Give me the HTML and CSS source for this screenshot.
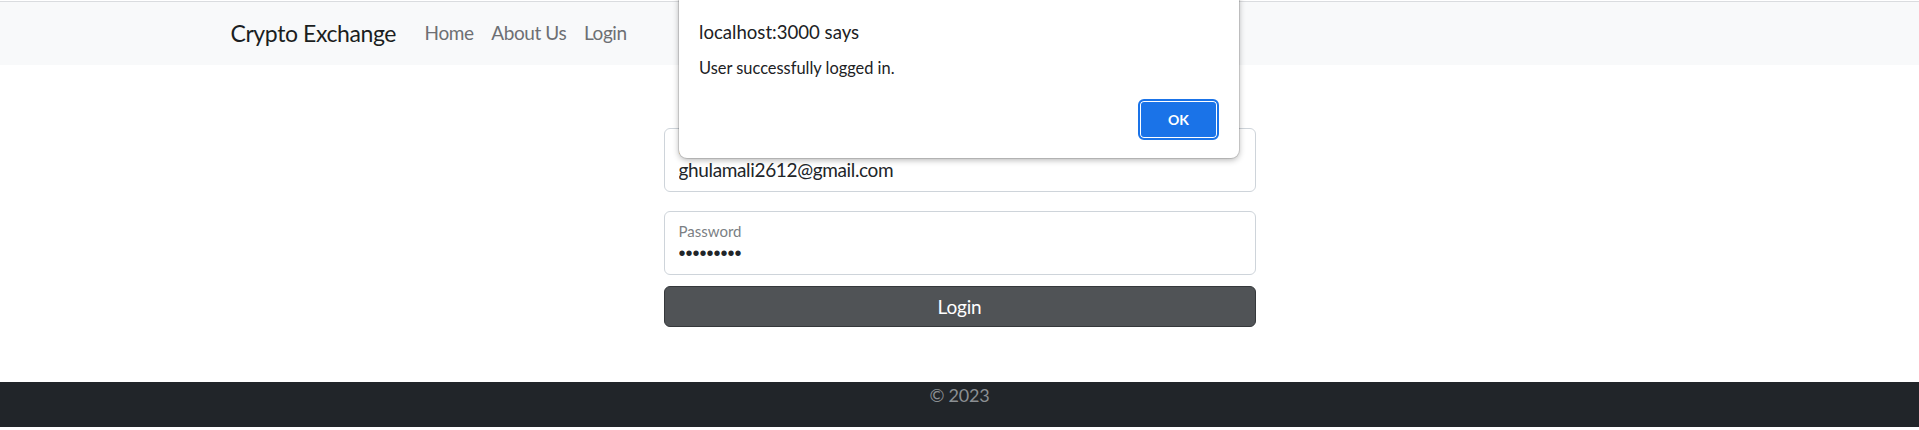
FILE: index.html
```html
<!DOCTYPE html>
<html lang="en">
<head>
<meta charset="utf-8">
<title>Crypto Exchange</title>
<link rel="stylesheet" href="styles.css">
</head>
<body>
  <nav class="navbar">
    <div class="nav-container">
      <a class="brand" href="#">Crypto Exchange</a>
      <ul class="nav-links">
        <li><a href="#">Home</a></li>
        <li><a href="#">About Us</a></li>
        <li><a href="#">Login</a></li>
      </ul>
    </div>
  </nav>

  <main class="main">
    <form class="login-form">
      <div class="field">
        <label class="field-label" for="email">Email address</label>
        <input class="field-input" id="email" type="email" value="ghulamali2612@gmail.com">
      </div>
      <div class="field field-password">
        <label class="field-label" for="password">Password</label>
        <input class="field-input" id="password" type="password" value="123456789">
      </div>
      <button class="login-btn" type="button">Login</button>
    </form>
  </main>

  <footer class="footer">© 2023</footer>

  <div class="dialog" role="alertdialog">
    <div class="dialog-title">localhost:3000 says</div>
    <div class="dialog-message">User successfully logged in.</div>
    <div class="dialog-actions">
      <button class="dialog-ok" type="button">OK</button>
    </div>
  </div>
</body>
</html>
```

FILE: styles.css
```css
* {
  box-sizing: border-box;
}

html, body {
  margin: 0;
  padding: 0;
}

body {
  padding-top: 1px;
  font-family: Lato, "Open Sans", "Liberation Sans", sans-serif;
  color: #212529;
  background: #ffffff;
  width: 1919px;
  height: 430px;
  overflow: hidden;
  position: relative;
}

/* Navbar */
.navbar {
  border-top: 1px solid #dadcdf;
  background: #f8f9fa;
  height: 64px;
  padding-bottom: 2px;
  display: flex;
  align-items: center;
}

.nav-container {
  width: 1458px;
  margin: 0 auto;
  display: flex;
  align-items: center;
}

.brand {
  font-size: 23px;
  letter-spacing: -0.4px;
  line-height: 30px;
  color: #1b1e21;
  text-decoration: none;
  margin-right: 19px;
}

.nav-links {
  list-style: none;
  margin: 0;
  padding: 0;
  display: flex;
}

.nav-links a {
  display: block;
  padding: 0 8.8px;
  font-size: 19px;
  letter-spacing: -0.4px;
  line-height: 30px;
  color: #6d6f73;
  text-decoration: none;
}

.nav-links li:first-child a {
  padding-left: 9.5px;
}

/* Main */
.main {
  padding-top: 63px;
  height: 317px;
}

.login-form {
  width: 592px;
  margin: 0 auto;
  display: flex;
  flex-direction: column;
}

.field {
  border: 1px solid #ced4da;
  border-radius: 6px;
  padding: 9px 14px 9px 14px;
  display: flex;
  flex-direction: column;
  background: #fff;
}

.field-password {
  margin-top: 19px;
}

.field-label {
  font-size: 15px;
  line-height: 20px;
  color: #7b7f84;
}

.field-input {
  border: none;
  outline: none;
  padding: 0;
  margin: 0;
  font-family: inherit;
  font-size: 19px;
  letter-spacing: -0.35px;
  line-height: 24px;
  height: 24px;
  color: #212529;
  background: transparent;
}

.field-password .field-input {
  font-family: "Liberation Sans", Arial, sans-serif;
  font-size: 20px;
  letter-spacing: 0;
}

.login-btn {
  margin-top: 11px;
  height: 41px;
  border: 1px solid #35383b;
  border-radius: 6px;
  background: #505356;
  color: #ffffff;
  font-family: inherit;
  font-size: 19px;
  letter-spacing: -0.2px;
  line-height: 24px;
  padding: 0;
}

/* Footer */
.footer {
  background: #212529;
  height: 45px;
  text-align: center;
  font-size: 18px;
  letter-spacing: -0.2px;
  line-height: 26px;
  color: #8b8f93;
}

/* Browser alert dialog (overlays the page) */
.dialog {
  position: absolute;
  top: -8px;
  left: 679px;
  width: 560px;
  background: #ffffff;
  border-radius: 8px;
  box-shadow: 0 0 0 1px rgba(0, 0, 0, 0.12), 0 2px 6px rgba(0, 0, 0, 0.3);
  padding: 28px 20px 18px 20px;
  color: #202124;
  font-family: Lato, "Open Sans", "Liberation Sans", sans-serif;
}

.dialog-title {
  font-size: 18.6px;
  line-height: 24px;
}

.dialog-message {
  margin-top: 14px;
  font-size: 16.4px;
  line-height: 20px;
}

.dialog-actions {
  margin-top: 21px;
  display: flex;
  justify-content: flex-end;
}

.dialog-ok {
  width: 81px;
  height: 41px;
  background: #1a73e8;
  border: 2px solid #1a73e8;
  box-shadow: inset 0 0 0 1px #ffffff;
  border-radius: 6px;
  color: #ffffff;
  font-family: inherit;
  font-weight: 700;
  font-size: 14px;
  padding: 0;
}
```
